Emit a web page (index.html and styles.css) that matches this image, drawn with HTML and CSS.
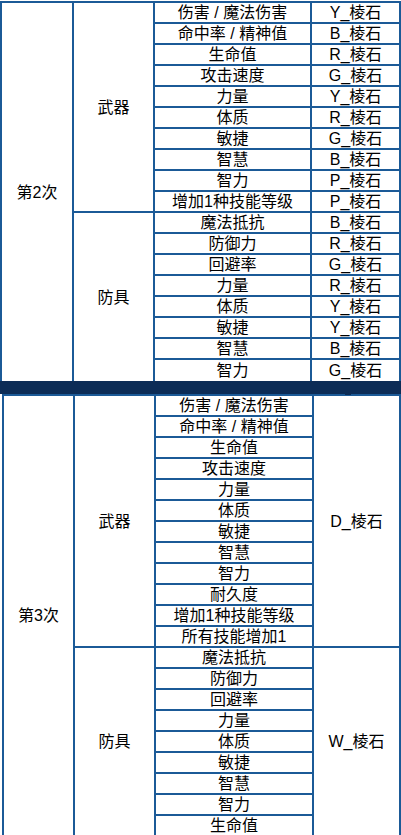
FILE: index.html
```html
<!DOCTYPE html>
<html lang="zh-CN">
<head>
<meta charset="utf-8">
<title>棱石</title>
<link rel="stylesheet" href="styles.css">
</head>
<body>
<div class="page">
  <table class="grid grid-a">
    <colgroup>
      <col class="c1"><col class="c2"><col class="c3"><col class="c4">
    </colgroup>
    <tbody>
      <tr><td rowspan="18" class="end">第2次</td><td rowspan="10">武器</td><td>伤害 / 魔法伤害</td><td>Y_棱石</td></tr>
      <tr><td>命中率 / 精神值</td><td>B_棱石</td></tr>
      <tr><td>生命值</td><td>R_棱石</td></tr>
      <tr><td>攻击速度</td><td>G_棱石</td></tr>
      <tr><td>力量</td><td>Y_棱石</td></tr>
      <tr><td>体质</td><td>R_棱石</td></tr>
      <tr><td>敏捷</td><td>G_棱石</td></tr>
      <tr><td>智慧</td><td>B_棱石</td></tr>
      <tr><td>智力</td><td>P_棱石</td></tr>
      <tr><td>增加1种技能等级</td><td>P_棱石</td></tr>
      <tr><td rowspan="8" class="end">防具</td><td>魔法抵抗</td><td>B_棱石</td></tr>
      <tr><td>防御力</td><td>R_棱石</td></tr>
      <tr><td>回避率</td><td>G_棱石</td></tr>
      <tr><td>力量</td><td>R_棱石</td></tr>
      <tr><td>体质</td><td>Y_棱石</td></tr>
      <tr><td>敏捷</td><td>Y_棱石</td></tr>
      <tr><td>智慧</td><td>B_棱石</td></tr>
      <tr><td class="end">智力</td><td class="end">G_棱石</td></tr>
    </tbody>
  </table>
  <div class="band"></div>
  <table class="grid grid-b">
    <colgroup>
      <col class="c1"><col class="c2"><col class="c3"><col class="c4">
    </colgroup>
    <tbody>
      <tr><td rowspan="21">第3次</td><td rowspan="12">武器</td><td>伤害 / 魔法伤害</td><td rowspan="12">D_棱石</td></tr>
      <tr><td>命中率 / 精神值</td></tr>
      <tr><td>生命值</td></tr>
      <tr><td>攻击速度</td></tr>
      <tr><td>力量</td></tr>
      <tr><td>体质</td></tr>
      <tr><td>敏捷</td></tr>
      <tr><td>智慧</td></tr>
      <tr><td>智力</td></tr>
      <tr><td>耐久度</td></tr>
      <tr><td>增加1种技能等级</td></tr>
      <tr><td>所有技能增加1</td></tr>
      <tr><td rowspan="9">防具</td><td>魔法抵抗</td><td rowspan="9">W_棱石</td></tr>
      <tr><td>防御力</td></tr>
      <tr><td>回避率</td></tr>
      <tr><td>力量</td></tr>
      <tr><td>体质</td></tr>
      <tr><td>敏捷</td></tr>
      <tr><td>智慧</td></tr>
      <tr><td>智力</td></tr>
      <tr><td>生命值</td></tr>
    </tbody>
  </table>
</div>
</body>
</html>
```

FILE: styles.css
```css
html, body {
  margin: 0;
  padding: 0;
  background: #ffffff;
}

body {
  font-family: "Liberation Sans", "Noto Sans CJK SC", sans-serif;
  font-size: 16px;
  color: #000000;
}

.page {
  width: 401px;
  padding-top: 1px;
}

.grid {
  border-collapse: separate;
  border-spacing: 0;
  table-layout: fixed;
  border-top: 2px solid #1b5a97;
  border-left: 2px solid #1b5a97;
}

.grid td {
  box-sizing: border-box;
  height: 21px;
  padding: 0;
  line-height: 19px;
  text-align: center;
  vertical-align: middle;
  white-space: nowrap;
  border-right: 2px solid #1b5a97;
  border-bottom: 2px solid #1b5a97;
}

.grid-a {
  width: 401px;
}

.grid-a td.end {
  border-bottom: 0;
}

.grid-a .c1 { width: 72px; }
.grid-a .c2 { width: 81px; }
.grid-a .c3 { width: 157px; }
.grid-a .c4 { width: 89px; }

.grid-b {
  width: 399px;
  margin-left: 2px;
}

.grid-b .c1 { width: 71px; }
.grid-b .c2 { width: 81px; }
.grid-b .c3 { width: 158px; }
.grid-b .c4 { width: 87px; }

.band {
  position: relative;
  height: 13px;
  background: #0c2c56;
}

.band::after {
  content: "";
  position: absolute;
  left: 345px;
  top: 12px;
  width: 6px;
  height: 2px;
  background: #0c2c56;
}
```
